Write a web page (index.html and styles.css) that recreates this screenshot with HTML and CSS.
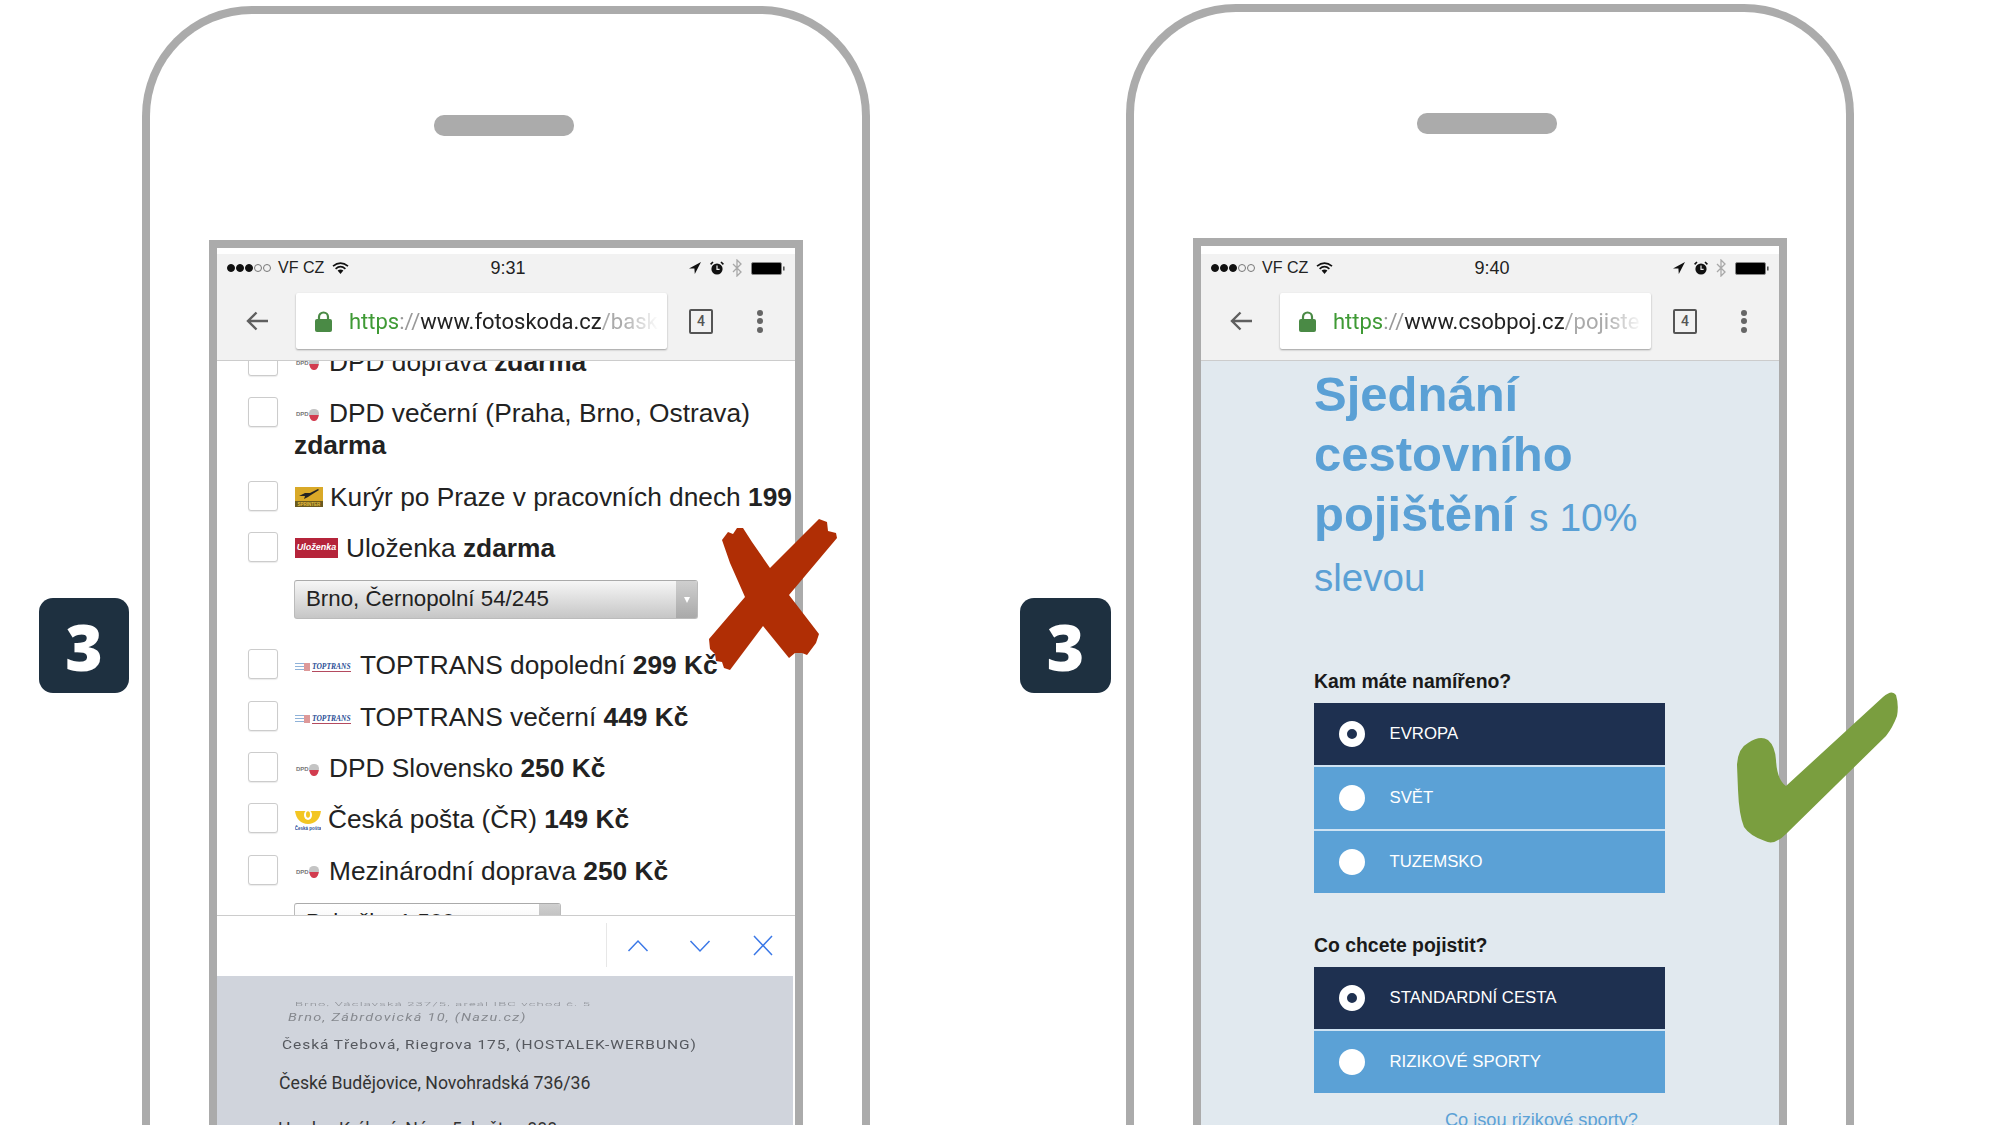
FILE: index.html
```html
<!DOCTYPE html>
<html>
<head>
<meta charset="utf-8">
<title>Mobile checkout comparison</title>
<link rel="stylesheet" href="styles.css">
</head>
<body>
<svg class="defs" width="0" height="0">
  <symbol id="wifi" viewBox="0 0 17 12">
    <path d="M1 4.2Q8.5-1.8 16 4.2M3.6 6.8Q8.5 2.6 13.4 6.8" fill="none" stroke="#111" stroke-width="1.7"/>
    <path d="M5.6 8.6Q8.5 6.2 11.4 8.6L8.5 12Z" fill="#111"/>
  </symbol>
  <symbol id="loc" viewBox="0 0 12 12"><path d="M12 0L0 6.6 5.4 6.6 5.8 12Z" fill="#111"/></symbol>
  <symbol id="alarm" viewBox="0 0 14 14">
    <circle cx="7" cy="8" r="5.6" fill="#111"/>
    <path d="M7 4.6V8.4H9.6" fill="none" stroke="#eee" stroke-width="1.2"/>
    <path d="M.6 3.4L3 1M13.4 3.4L11 1" stroke="#111" stroke-width="1.6"/>
  </symbol>
  <symbol id="bt" viewBox="0 0 10 18"><path d="M1 5L9 13 5 17V1L9 5 1 13" fill="none" stroke="#a8a8a8" stroke-width="1.3"/></symbol>
  <symbol id="battery" viewBox="0 0 34 13">
    <rect x=".5" y=".5" width="30" height="12" rx="1.5" fill="#000" stroke="#888"/>
    <rect x="32" y="4.5" width="1.6" height="4" fill="#555"/>
  </symbol>
  <symbol id="back" viewBox="0 0 22 22"><path d="M22 11H2M10.500 2.500L2 11 10.500 19.500" fill="none" stroke="#5f5f5f" stroke-width="2.400"/></symbol>
  <symbol id="lock" viewBox="0 0 17 21">
    <path d="M4 9V6A4.500 4.500 0 0 1 13 6V9" fill="none" stroke="#4a8a45" stroke-width="2.200"/>
    <rect y="8" width="17" height="13" rx="2" fill="#4a8a45"/>
  </symbol>
</svg>

<div class="stage">
  <div class="badge">3</div>

  <div class="phone">
    <div class="speaker"></div>
    <div class="frame">
      <div class="screen">
        <div class="chrome">
          <div class="status">
            <div class="status-left">
              <i class="sig on"></i><i class="sig on"></i><i class="sig on"></i><i class="sig"></i><i class="sig"></i>
              <span class="carrier">VF CZ</span>
              <svg class="ic-wifi"><use href="#wifi"/></svg>
            </div>
            <span class="clock">9:31</span>
            <div class="status-right">
              <svg class="ic-loc"><use href="#loc"/></svg>
              <svg class="ic-alarm"><use href="#alarm"/></svg>
              <svg class="ic-bt"><use href="#bt"/></svg>
              <svg class="ic-battery"><use href="#battery"/></svg>
            </div>
          </div>
          <div class="toolbar">
            <svg class="ic-back"><use href="#back"/></svg>
            <div class="url">
              <svg class="ic-lock"><use href="#lock"/></svg>
              <span class="url-text"><span class="scheme">https</span><span class="sep">://</span>www.fotoskoda.cz<span class="path">/bask</span></span>
            </div>
            <span class="tabs">4</span>
            <span class="menu"><i></i><i></i><i></i></span>
          </div>
        </div>

        <div class="list">
          <div class="row"><span class="check"></span><div class="label"><span class="lg-dpd"><i class="dpd-name">DPD</i><i class="dpd-mark"></i></span>DPD doprava <b>zdarma</b></div></div>
          <div class="row"><span class="check"></span><div class="label"><span class="lg-dpd"><i class="dpd-name">DPD</i><i class="dpd-mark"></i></span>DPD večerní (Praha, Brno, Ostrava) <b>zdarma</b></div></div>
          <div class="row"><span class="check"></span><div class="label nowrap">
            <svg class="lg-sprinter" viewBox="0 0 28 20">
              <rect width="28" height="20" fill="#d9a928"/>
              <path d="M4 9L10 6 15 6 23 2 24 3 16 8 13 10 9 12 10 9Z" fill="#222"/>
              <rect y="14" width="28" height="6" fill="#6b5a1e"/>
              <text x="14" y="18.500" text-anchor="middle" font-family="Liberation Sans, sans-serif" font-size="4.500" font-weight="700" fill="#e8c040">SPRINTER</text>
            </svg>Kurýr po Praze v pracovních dnech <b>199</b></div></div>
          <div class="row"><span class="check"></span><div class="label">
            <span class="lg-ulozenka">Uloženka</span>Uloženka <b>zdarma</b></div></div>
          <div class="select"><span class="select-text">Brno, Černopolní 54/245</span><span class="select-btn"><i></i></span></div>
          <div class="row"><span class="check"></span><div class="label"><span class="lg-top"><i class="top-bars"></i><i class="top-name">TOPTRANS</i></span>TOPTRANS dopolední <b>299 Kč</b></div></div>
          <div class="row"><span class="check"></span><div class="label"><span class="lg-top"><i class="top-bars"></i><i class="top-name">TOPTRANS</i></span>TOPTRANS večerní <b>449 Kč</b></div></div>
          <div class="row"><span class="check"></span><div class="label"><span class="lg-dpd"><i class="dpd-name">DPD</i><i class="dpd-mark"></i></span>DPD Slovensko <b>250 Kč</b></div></div>
          <div class="row"><span class="check"></span><div class="label">
            <svg class="lg-posta" viewBox="0 0 26 21">
              <path d="M0 1H26C25 9 20 14 13 14S1 9 0 1Z" fill="#f3c623"/>
              <ellipse cx="13" cy="5" rx="4" ry="5" fill="#fff"/>
              <ellipse cx="13" cy="4.500" rx="2" ry="3.200" fill="#f3c623"/>
              <text x="13" y="20" text-anchor="middle" font-family="Liberation Sans, sans-serif" font-size="4.500" font-weight="700" fill="#2b4f96">Česká pošta</text>
            </svg>Česká pošta (ČR) <b>149 Kč</b></div></div>
          <div class="row"><span class="check"></span><div class="label"><span class="lg-dpd"><i class="dpd-name">DPD</i><i class="dpd-mark"></i></span>Mezinárodní doprava <b>250 Kč</b></div></div>
          <div class="select short"><span class="select-text">Pobočka 1 500</span><span class="select-btn"></span></div>
        </div>

        <div class="findbar">
          <svg class="find-icons" width="187" height="44" viewBox="0 0 187 44">
            <path d="M0 0V44" stroke="#d0d0d0"/>
            <path d="M22.500 28L32 18 41.500 28M84.500 18L94 28 103.500 18M148 13L166 32M166 13L148 32" fill="none" stroke="#3b78e7" stroke-width="1.500"/>
          </svg>
        </div>

        <div class="picker">
          <div class="wheel w1">Brno, Václavská 237/5, areál IBC vchod č. 5</div>
          <div class="wheel w2">Brno, Zábrdovická 10, (Nazu.cz)</div>
          <div class="wheel w3">Česká Třebová, Riegrova 175, (HOSTALEK-WERBUNG)</div>
          <div class="wheel w4">České Budějovice, Novohradská 736/36</div>
          <div class="wheel w5">Hradec Králové, Nám. 5. května 888</div>
        </div>
      </div>
    </div>
  </div>

  <div class="badge second">3</div>

  <div class="phone right">
    <div class="speaker"></div>
    <div class="frame">
      <div class="screen">
        <div class="chrome">
          <div class="status">
            <div class="status-left">
              <i class="sig on"></i><i class="sig on"></i><i class="sig on"></i><i class="sig"></i><i class="sig"></i>
              <span class="carrier">VF CZ</span>
              <svg class="ic-wifi"><use href="#wifi"/></svg>
            </div>
            <span class="clock">9:40</span>
            <div class="status-right">
              <svg class="ic-loc"><use href="#loc"/></svg>
              <svg class="ic-alarm"><use href="#alarm"/></svg>
              <svg class="ic-bt"><use href="#bt"/></svg>
              <svg class="ic-battery"><use href="#battery"/></svg>
            </div>
          </div>
          <div class="toolbar">
            <svg class="ic-back"><use href="#back"/></svg>
            <div class="url">
              <svg class="ic-lock"><use href="#lock"/></svg>
              <span class="url-text"><span class="scheme">https</span><span class="sep">://</span>www.csobpoj.cz<span class="path">/pojiste</span></span>
            </div>
            <span class="tabs">4</span>
            <span class="menu"><i></i><i></i><i></i></span>
          </div>
        </div>

        <div class="form">
          <h1 class="title">Sjednání<br>cestovního<br>pojištění <span class="title-light">s 10%</span><span class="title-last">slevou</span></h1>

          <h2 class="question first">Kam máte namířeno?</h2>
          <div class="options">
            <div class="option active"><span class="radio"></span>EVROPA</div>
            <div class="option"><span class="radio"></span>SVĚT</div>
            <div class="option"><span class="radio"></span>TUZEMSKO</div>
          </div>

          <h2 class="question">Co chcete pojistit?</h2>
          <div class="options">
            <div class="option active"><span class="radio"></span>STANDARDNÍ CESTA</div>
            <div class="option"><span class="radio"></span>RIZIKOVÉ SPORTY</div>
          </div>
          <a class="sports-link">Co jsou rizikové sporty?</a>
        </div>
      </div>
    </div>
  </div>

  <!-- hand drawn marks lying over both phones -->
  <svg class="marks" width="2000" height="1125" viewBox="0 0 2000 1125">
    <path fill="#b02e05" d="M722 540L728 532 733 534 737 528 743 528 752 542 770 568 819 519 827 522 828 531 836 533 837 538 789 595 819 634 816 643 807 655 802 653 795 653 789 658 763 626 730 670 724 668 722 662 716 661 715 654 710 649 709 639 745 597 730 563Z"/>
    <path fill="#7a9e3f" d="M1883 697Q1892 689 1896 695Q1899 705 1897 716Q1893 727 1886 736L1786 834Q1774 846 1765 841Q1750 836 1744 827Q1739 815 1738 790L1737 765Q1738 748 1748 743Q1760 735 1768 740Q1775 746 1776 760Q1777 780 1786 786Z"/>
  </svg>
</div>
</body>
</html>
```

FILE: styles.css
```css
* {
  box-sizing: border-box;
}

body {
  margin: 0;
  background: white;
  font-family: "Liberation Sans", Arial, sans-serif;
  color: #222;
}

.defs {
  display: block;
  height: 0;
}

.stage {
  position: relative;
  display: flex;
  align-items: flex-start;
  width: 2000px;
  height: 1125px;
  padding-left: 39px;
  overflow: hidden;
}

/* step number */
.badge {
  flex: none;
  width: 90px;
  height: 95px;
  margin: 598px 13px 0 0;
  border-radius: 14px;
  background: #1e3040;
  color: white;
  font-family: "Open Sans", sans-serif;
  font-weight: 800;
  font-size: 64px;
  line-height: 98px;
  text-align: center;
}

.badge.second {
  width: 91px;
  margin-left: 150px;
  margin-right: 15px;
}

/* phone outline */
.phone {
  flex: none;
  width: 728px;
  height: 1140px;
  margin-top: 6px;
  border: 8px solid #ababab;
  border-bottom: none;
  border-radius: 110px 110px 0 0;
}

.phone.right {
  margin-top: 4px;
}

.speaker {
  width: 140px;
  height: 21px;
  margin: 101px 0 0 284px;
  border-radius: 10px;
  background: #ababab;
}

.right .speaker {
  margin-left: 283px;
}

.frame {
  width: 594px;
  height: 900px;
  margin: 104px 0 0 59px;
  padding-top: 6px;
  border: 8px solid #ababab;
  border-bottom: none;
  background: white;
}

.right .frame {
  padding-top: 8px;
}

.screen {
  display: flex;
  flex-direction: column;
  height: 100%;
}

/* browser chrome */
.chrome {
  flex: none;
  height: 107px;
  background: #f2f2f2;
  border-bottom: 1px solid #ccc;
}

.status {
  display: flex;
  align-items: center;
  height: 28px;
  padding: 0 10px;
}

.status-left {
  display: flex;
  align-items: center;
  width: 263px;
}

.sig {
  width: 8px;
  height: 8px;
  margin-right: 1px;
  border: 1px solid #777;
  border-radius: 50%;
}

.sig.on {
  border-color: #111;
  background: #111;
}

.carrier {
  margin-left: 6px;
  font-size: 16px;
}

.ic-wifi {
  width: 17px;
  height: 12px;
  margin-left: 8px;
}

.clock {
  width: 36px;
  font-size: 18px;
  text-align: center;
}

.status-right {
  display: flex;
  align-items: center;
  margin-left: auto;
}

.ic-loc {
  width: 12px;
  height: 12px;
  margin-right: 9px;
}

.ic-alarm {
  width: 14px;
  height: 14px;
  margin-right: 8px;
}

.ic-bt {
  width: 10px;
  height: 18px;
  margin-right: 9px;
}

.ic-battery {
  width: 34px;
  height: 13px;
}

.toolbar {
  display: flex;
  align-items: center;
  height: 78px;
  padding-left: 29px;
}

.ic-back {
  flex: none;
  width: 22px;
  height: 22px;
  margin-right: 28px;
}

.url {
  flex: none;
  display: flex;
  align-items: center;
  width: 371px;
  height: 56px;
  padding-left: 19px;
  background: white;
  border-radius: 2px;
  box-shadow: 0 1px 2px rgba(0, 0, 0, 0.35);
}

.ic-lock {
  flex: none;
  width: 17px;
  height: 21px;
  margin-right: 17px;
}

.url-text {
  flex: 1;
  margin-right: 8px;
  overflow: hidden;
  white-space: nowrap;
  font-family: Roboto, sans-serif;
  font-size: 22px;
  color: #222;
  -webkit-mask-image: linear-gradient(to right, black 88%, transparent);
  mask-image: linear-gradient(to right, black 88%, transparent);
}

.scheme {
  color: #3f9a35;
}

.sep {
  color: #999;
}

.path {
  color: #aaa;
}

.tabs {
  flex: none;
  width: 24px;
  height: 25px;
  margin-left: 22px;
  border: 2px solid #555;
  border-radius: 2px;
  font-family: Roboto, sans-serif;
  font-size: 14px;
  font-weight: 500;
  line-height: 21px;
  text-align: center;
  color: #555;
}

.menu {
  flex: none;
  display: flex;
  flex-direction: column;
  gap: 2.5px;
  margin-left: 44px;
}

.menu i {
  width: 6px;
  height: 6px;
  border-radius: 50%;
  background: #666;
}

/* left page: delivery list */
.list {
  flex: none;
  display: flex;
  flex-direction: column;
  gap: 19.3px;
  height: 554px;
  padding: 0 0 0 31px;
  overflow: hidden;
  background: white;
}

.row {
  flex: none;
  display: flex;
  gap: 16px;
  width: 547px;
}

.row:first-child {
  margin-top: -15px;
}

.check {
  flex: none;
  width: 30px;
  height: 30px;
  border: 1px solid #ccc;
  border-radius: 3px;
  box-shadow: 0 1px 1px rgba(0, 0, 0, 0.08);
  background: white;
}

.label {
  font-size: 26.3px;
  line-height: 32px;
}

.nowrap {
  white-space: nowrap;
}

.label svg,
.lg-ulozenka {
  vertical-align: middle;
}

/* carrier logos */
.lg-dpd {
  display: inline-flex;
  align-items: center;
  width: 24px;
  height: 13px;
  margin: 0 9px 0 2px;
  vertical-align: 6px;
}

.dpd-name {
  width: 13px;
  color: #777;
  font-size: 6px;
  font-style: normal;
  font-weight: 700;
  line-height: 13px;
}

.dpd-mark {
  width: 10px;
  height: 12px;
  border-radius: 50% 50% 50% 50% / 40% 40% 70% 70%;
  background: linear-gradient(#c4c4c4 50%, #d23c4f 50%);
}

.lg-top {
  display: inline-flex;
  align-items: center;
  gap: 2px;
  width: 57px;
  height: 11px;
  margin: 0 8px 0 1px;
  vertical-align: 3px;
}

.top-bars {
  flex: none;
  width: 15px;
  height: 8px;
  background: repeating-linear-gradient(#8fb2d8 0 1px, transparent 1px 3px);
  border-right: 6px solid #d99;
}

.top-name {
  flex: none;
  border-bottom: 1px solid #b44a5f;
  color: #2b4f96;
  font-family: "Liberation Serif", serif;
  font-size: 7.5px;
  font-weight: 700;
  line-height: 9px;
}

.lg-sprinter {
  width: 28px;
  height: 20px;
  margin: -3px 7px 0 1px;
}

.lg-posta {
  width: 26px;
  height: 21px;
  margin: -2px 7px 0 1px;
}

.lg-ulozenka {
  display: inline-block;
  width: 43px;
  height: 20px;
  margin: -3px 8px 0 1px;
  background: #b5243a;
  color: white;
  font-size: 9px;
  font-style: italic;
  font-weight: 700;
  line-height: 18px;
  text-align: center;
}

.select {
  flex: none;
  display: flex;
  width: 404px;
  height: 39px;
  margin: -3px 0 11px 46px;
  border: 1px solid #bbb;
  border-top-color: #aaa;
  border-radius: 3px;
  background: linear-gradient(#f6f6f6, #c6c6c6);
  overflow: hidden;
}

.select.short {
  width: 267px;
  background: linear-gradient(white, #f0f0f0);
}

.select-text {
  flex: 1;
  padding-left: 11px;
  font-size: 22.3px;
  line-height: 36px;
}

.select-btn {
  flex: none;
  display: flex;
  align-items: center;
  justify-content: center;
  width: 21px;
  background: linear-gradient(#cfcfcf, #a9a9a9);
}

.select-btn i {
  border-top: 6px solid white;
  border-left: 3px solid transparent;
  border-right: 3px solid transparent;
}

.findbar {
  flex: none;
  display: flex;
  justify-content: flex-end;
  align-items: center;
  height: 61px;
  padding-right: 2px;
  border-top: 1px solid #ccc;
  background: white;
}

.find-icons {
  margin-top: -2px;
}

/* picker wheel under the find bar */
.picker {
  flex: 1;
  margin-right: 2px;
  padding-top: 21px;
  background: #d0d4dc;
  white-space: nowrap;
  font-family: Roboto, sans-serif;
  color: #333;
}

.wheel {
  height: 20px;
  font-size: 17.7px;
  font-weight: 300;
  line-height: 20px;
  padding-left: 61px;
}

.w1 {
  height: 14px;
  padding-left: 78px;
  line-height: 14px;
  font-size: 13px;
  color: #8a8d93;
  transform: scaleY(0.4);
  letter-spacing: 1.2px;
}

.w2 {
  height: 14px;
  padding-left: 71px;
  line-height: 14px;
  font-size: 14.5px;
  font-weight: 400;
  font-style: italic;
  color: #85888e;
  letter-spacing: 1.3px;
  transform: scaleY(0.75);
}

.w3 {
  height: 14px;
  margin-top: 13px;
  padding-left: 65px;
  line-height: 14px;
  font-size: 15.5px;
  font-weight: 400;
  color: #55585e;
  letter-spacing: 0.95px;
  transform: scaleY(0.85);
}

.w4 {
  margin-top: 21px;
  padding-left: 62px;
  font-weight: 400;
}

.w5 {
  margin-top: 26px;
  font-weight: 400;
}

/* right page: insurance form */
.form {
  flex: 1;
  padding: 3px 0 0 113px;
  background: #e1e9ef;
  overflow: hidden;
}

.title {
  margin: 0;
  color: #5aa0d5;
  font-size: 49px;
  font-weight: 700;
  line-height: 60px;
}

.title-light {
  font-size: 39px;
  font-weight: 400;
}

.title-last {
  display: block;
  font-size: 38.5px;
  font-weight: 400;
  line-height: 60px;
}

.question {
  margin: 40px 0 10px;
  color: #1a1a1a;
  font-size: 19.4px;
  font-weight: 700;
  line-height: 24px;
}

.question.first {
  margin-top: 60.5px;
}

.options {
  display: flex;
  flex-direction: column;
  gap: 2px;
  width: 351px;
  background: #cfe3f3;
}

.option {
  display: flex;
  align-items: center;
  gap: 25px;
  height: 62px;
  padding-left: 24.5px;
  background: #5ba1d6;
  color: white;
  font-size: 16.75px;
}

.option.active {
  background: #1e3050;
}

.radio {
  flex: none;
  width: 26px;
  height: 26px;
  border-radius: 50%;
  background: white;
}

.active .radio {
  border: 8px solid white;
  background: #1e3050;
}

.sports-link {
  display: block;
  width: 324px;
  margin-top: 17px;
  color: #5ba1d6;
  font-size: 18.2px;
  line-height: 20px;
  text-align: right;
}

.marks {
  position: absolute;
  left: 0;
  top: 0;
}
```
